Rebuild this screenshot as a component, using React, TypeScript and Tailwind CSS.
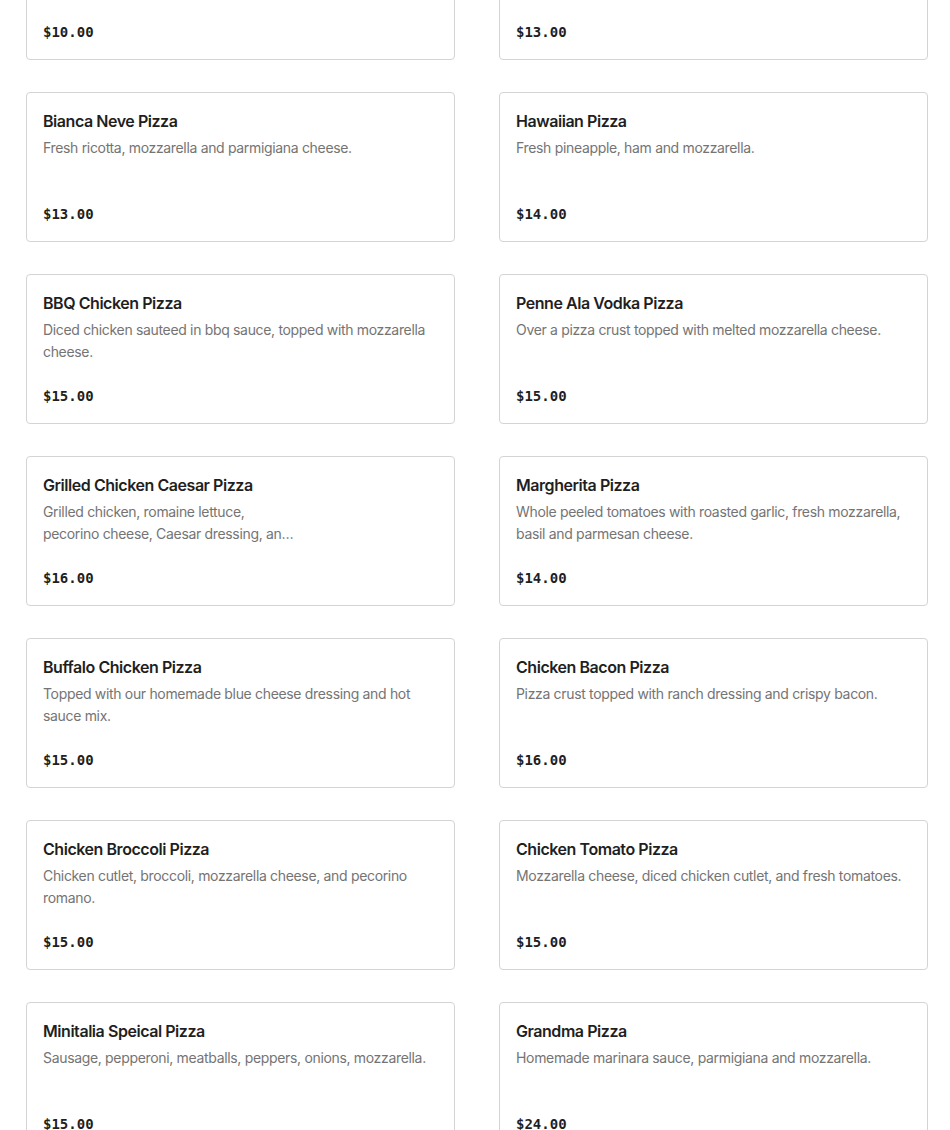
import React from "react";

type Item = { title: string; lines: string[]; price: string };

const items: Item[] = [
  { title: "Cheese Pizza", lines: ["Classic tomato sauce and mozzarella."], price: "$10.00" },
  { title: "Pepperoni Pizza", lines: ["Tomato sauce, mozzarella and pepperoni."], price: "$13.00" },
  { title: "Bianca Neve Pizza", lines: ["Fresh ricotta, mozzarella and parmigiana cheese."], price: "$13.00" },
  { title: "Hawaiian Pizza", lines: ["Fresh pineapple, ham and mozzarella."], price: "$14.00" },
  { title: "BBQ Chicken Pizza", lines: ["Diced chicken sauteed in bbq sauce, topped with mozzarella", "cheese."], price: "$15.00" },
  { title: "Penne Ala Vodka Pizza", lines: ["Over a pizza crust topped with melted mozzarella cheese."], price: "$15.00" },
  { title: "Grilled Chicken Caesar Pizza", lines: ["Grilled chicken, romaine lettuce,", "pecorino cheese, Caesar dressing, an…"], price: "$16.00" },
  { title: "Margherita Pizza", lines: ["Whole peeled tomatoes with roasted garlic, fresh mozzarella,", "basil and parmesan cheese."], price: "$14.00" },
  { title: "Buffalo Chicken Pizza", lines: ["Topped with our homemade blue cheese dressing and hot", "sauce mix."], price: "$15.00" },
  { title: "Chicken Bacon Pizza", lines: ["Pizza crust topped with ranch dressing and crispy bacon."], price: "$16.00" },
  { title: "Chicken Broccoli Pizza", lines: ["Chicken cutlet, broccoli, mozzarella cheese, and pecorino", "romano."], price: "$15.00" },
  { title: "Chicken Tomato Pizza", lines: ["Mozzarella cheese, diced chicken cutlet, and fresh tomatoes."], price: "$15.00" },
  { title: "Minitalia Speical Pizza", lines: ["Sausage, pepperoni, meatballs, peppers, onions, mozzarella."], price: "$15.00" },
  { title: "Grandma Pizza", lines: ["Homemade marinara sauce, parmigiana and mozzarella."], price: "$24.00" },
];

function Card({ item }: { item: Item }) {
  return (
    <div className="h-[150px] rounded-[4px] border border-[#d4d4d4] bg-white px-4 pt-4 pb-[17px] flex flex-col">
      <div className="text-[16px] leading-6 font-semibold tracking-[-0.45px] text-[#1f1f1f] whitespace-nowrap">{item.title}</div>
      <div className="mt-[4px] text-[14px] leading-[22px] tracking-[-0.33px] text-[#747474] whitespace-nowrap">
        {item.lines.map((l, i) => (
          <div key={i}>{l}</div>
        ))}
      </div>
      <div className="mt-auto text-[14px] leading-5 font-bold text-[#1f1f1f] font-['DejaVu_Sans_Mono',monospace]">
        {item.price}
      </div>
    </div>
  );
}

export default function App() {
  return (
    <div className="min-h-[1130px] bg-white overflow-hidden font-['Inter',sans-serif]">
      <div className="-mt-[90px] grid grid-cols-2 gap-x-[44px] gap-y-8 pl-[26px] pr-[22px]">
        {items.map((it, i) => (
          <Card key={i} item={it} />
        ))}
      </div>
    </div>
  );
}
